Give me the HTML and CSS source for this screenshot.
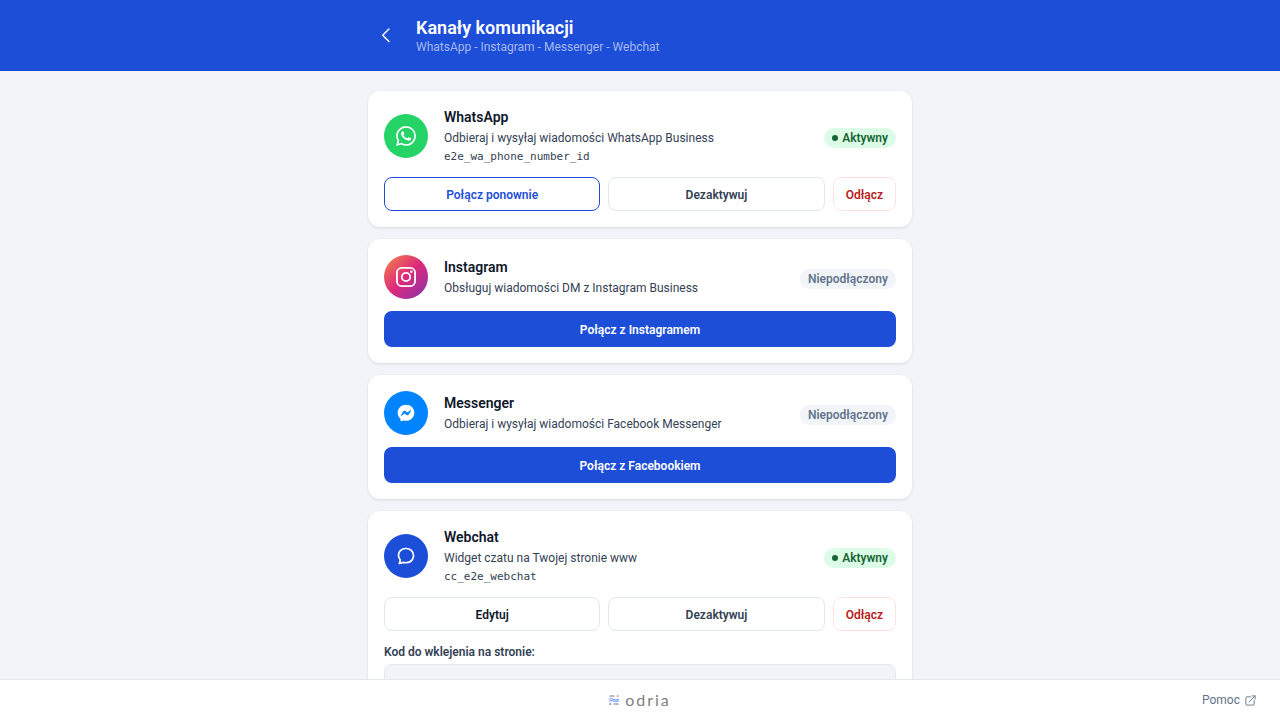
FILE: index.html
```html
<!DOCTYPE html>
<html lang="pl">
<head>
    <meta charset="UTF-8">
    <meta name="viewport" content="width=device-width, initial-scale=1.0">
    <title>Kanały komunikacji</title>
    <link rel="stylesheet" href="styles.css">
</head>
<body>
    <header class="topbar">
        <div class="topbar-inner">
            <a class="back" href="#" aria-label="Wstecz">
                <svg width="20" height="20" viewBox="0 0 24 24" fill="none" stroke="currentColor" stroke-width="1.7" stroke-linecap="round" stroke-linejoin="round"><path d="M15.5 3.500L8 11l7.500 7.500"/></svg>
            </a>
            <div>
                <h1>Kanały komunikacji</h1>
                <p class="subtitle">WhatsApp - Instagram - Messenger - Webchat</p>
            </div>
        </div>
    </header>

    <main class="content">
        <div class="channels">
            <section class="card">
                <div class="card-head">
                    <span class="icon whatsapp">
                        <svg width="20" height="20" viewBox="0 0 24 24" fill="currentColor"><path d="M17.472 14.382c-.297-.149-1.758-.867-2.030-.967-.273-.099-.471-.148-.670.150-.197.297-.767.966-.940 1.164-.173.199-.347.223-.644.075-.297-.150-1.255-.463-2.390-1.475-.883-.788-1.480-1.761-1.653-2.059-.173-.297-.018-.458.130-.606.134-.133.298-.347.446-.520.149-.174.198-.298.298-.497.099-.198.050-.371-.025-.520-.075-.149-.669-1.612-.916-2.207-.242-.579-.487-.500-.669-.510-.173-.008-.371-.010-.570-.010-.198 0-.520.074-.792.372-.272.297-1.040 1.016-1.040 2.479 0 1.462 1.065 2.875 1.213 3.074.149.198 2.096 3.200 5.077 4.487.709.306 1.262.489 1.694.625.712.227 1.360.195 1.871.118.571-.085 1.758-.719 2.006-1.413.248-.694.248-1.289.173-1.413-.074-.124-.272-.198-.570-.347m-5.421 7.403h-.004a9.870 9.870 0 01-5.031-1.378l-.361-.214-3.741.982.998-3.648-.235-.374a9.860 9.860 0 01-1.510-5.260c.001-5.450 4.436-9.884 9.888-9.884 2.640 0 5.122 1.030 6.988 2.898a9.825 9.825 0 012.893 6.994c-.003 5.450-4.437 9.884-9.885 9.884m8.413-18.297A11.815 11.815 0 0012.050 0C5.495 0 .160 5.335.157 11.892c0 2.096.547 4.142 1.588 5.945L.057 24l6.305-1.654a11.882 11.882 0 005.683 1.448h.005c6.554 0 11.890-5.335 11.893-11.893a11.821 11.821 0 00-3.480-8.413z"/></svg>
                    </span>
                    <div class="info">
                        <h2>WhatsApp</h2>
                        <p>Odbieraj i wysyłaj wiadomości WhatsApp Business</p>
                        <code>e2e_wa_phone_number_id</code>
                    </div>
                    <span class="badge active">Aktywny</span>
                </div>
                <div class="actions">
                    <button class="btn btn-outline">Połącz ponownie</button>
                    <button class="btn">Dezaktywuj</button>
                    <button class="btn btn-danger">Odłącz</button>
                </div>
            </section>

            <section class="card">
                <div class="card-head">
                    <span class="icon instagram">
                        <svg width="20" height="20" viewBox="0 0 24 24" fill="none" stroke="currentColor" stroke-width="2.2"><rect x="1.1" y="1.1" width="21.8" height="21.8" rx="5.8"/><circle cx="12" cy="12" r="5"/><circle cx="18.4" cy="5.6" r="1.5" fill="currentColor" stroke="none"/></svg>
                    </span>
                    <div class="info">
                        <h2>Instagram</h2>
                        <p>Obsługuj wiadomości DM z Instagram Business</p>
                    </div>
                    <span class="badge">Niepodłączony</span>
                </div>
                <div class="actions">
                    <button class="btn btn-primary">Połącz z Instagramem</button>
                </div>
            </section>

            <section class="card">
                <div class="card-head">
                    <span class="icon messenger">
                        <svg width="20" height="20" viewBox="0 0 24 24" fill="currentColor"><path d="M12 2C6.360 2 2 6.130 2 11.700c0 2.910 1.190 5.440 3.140 7.170.160.150.260.350.270.570l.050 1.780c.020.570.600.940 1.120.710l1.980-.870c.170-.080.360-.090.530-.040.910.250 1.870.380 2.910.380 5.640 0 10-4.130 10-9.700S17.640 2 12 2zm6 7.460l-2.930 4.670c-.470.730-1.470.920-2.170.370l-2.340-1.730a.6.6 0 00-.720 0l-3.160 2.400c-.420.330-.970-.170-.680-.630l2.930-4.670c.470-.730 1.470-.920 2.170-.400l2.340 1.730a.6.6 0 00.720 0l3.160-2.400c.420-.300.970.200.680.660z"/></svg>
                    </span>
                    <div class="info">
                        <h2>Messenger</h2>
                        <p>Odbieraj i wysyłaj wiadomości Facebook Messenger</p>
                    </div>
                    <span class="badge">Niepodłączony</span>
                </div>
                <div class="actions">
                    <button class="btn btn-primary">Połącz z Facebookiem</button>
                </div>
            </section>

            <section class="card">
                <div class="card-head">
                    <span class="icon webchat">
                        <svg width="20" height="20" viewBox="0 0 24 24" fill="none" stroke="currentColor" stroke-width="2" stroke-linecap="round" stroke-linejoin="round"><path d="M21 11.500a8.380 8.380 0 01-.900 3.800 8.500 8.500 0 01-7.600 4.700 8.380 8.380 0 01-3.800-.300L4 21l1.200-4.300A8.380 8.380 0 013 11.500a8.500 8.500 0 014.700-7.600 8.380 8.380 0 013.800-.900h1a8.480 8.480 0 018.500 8z"/></svg>
                    </span>
                    <div class="info">
                        <h2>Webchat</h2>
                        <p>Widget czatu na Twojej stronie www</p>
                        <code>cc_e2e_webchat</code>
                    </div>
                    <span class="badge active">Aktywny</span>
                </div>
                <div class="actions">
                    <button class="btn btn-dark">Edytuj</button>
                    <button class="btn">Dezaktywuj</button>
                    <button class="btn btn-danger">Odłącz</button>
                </div>
                <div class="embed">
                    <p class="embed-label">Kod do wklejenia na stronie:</p>
                    <pre class="snippet">&lt;script src="https://app.odria.pl/widget.js" data-widget-id="cc_e2e_webchat"&gt;&lt;/script&gt;</pre>
                </div>
            </section>
        </div>
    </main>

    <footer class="footer">
        <a class="brand" href="#">
            <svg width="10" height="10" viewBox="0 0 20 20" fill="none" stroke-width="2.200" stroke-linecap="round">
                <path d="M2 2h8M10 18h8" stroke="#6b7280"/>
                <path d="M1 8c5-3 8 4 18 1M1 12c5-3 8 3 18 0" stroke="#4f7ff5" stroke-width="1.800"/>
                <path d="M17 2h1" stroke="#ef6b6b" stroke-width="3"/>
                <path d="M2 18h1" stroke="#3b6ff0" stroke-width="3"/>
            </svg>
            <span>odria</span>
        </a>
        <a class="help" href="#">
            Pomoc
            <svg width="11" height="11" viewBox="0 0 24 24" fill="none" stroke="currentColor" stroke-width="2" stroke-linecap="round" stroke-linejoin="round"><path d="M12 4H4a2 2 0 00-2 2v14a2 2 0 002 2h14a2 2 0 002-2v-8M15 2h7v7M22 2L9 15"/></svg>
        </a>
    </footer>
</body>
</html>
```
FILE: styles.css
```css
* {
    box-sizing: border-box;
    margin: 0;
    padding: 0;
}
body {
    font-family: Roboto, "Noto Sans", sans-serif;
    font-size: 12px;
    color: #334155;
    background-color: #f1f5f9;
    height: 100vh;
    display: flex;
    flex-direction: column;
}
a {
    color: inherit;
    text-decoration: none;
}
.topbar {
    background-color: #1d4ed8;
    color: #fff;
    padding: 16px;
}
.topbar-inner {
    max-width: 544px;
    margin: 0 auto;
    display: flex;
    align-items: center;
    gap: 12px;
}
.back {
    width: 36px;
    height: 36px;
    display: flex;
    align-items: center;
    justify-content: center;
}
h1 {
    font-size: 18px;
    font-weight: 600;
    line-height: 24px;
}
.subtitle {
    font-size: 12px;
    line-height: 15px;
    color: #a5b8ef;
}
.content {
    flex: 1;
    min-height: 0;
    overflow-y: auto;
    scrollbar-width: none;
    padding: 20px 16px;
}
.channels {
    max-width: 544px;
    margin: 0 auto;
    display: flex;
    flex-direction: column;
    gap: 12px;
}
.card {
    background-color: #fff;
    border-radius: 12px;
    padding: 16px;
    box-shadow: 0 1px 3px rgba(15, 23, 42, 0.12);
}
.card-head {
    display: flex;
    align-items: center;
    gap: 16px;
}
.icon {
    width: 44px;
    height: 44px;
    flex-shrink: 0;
    border-radius: 50%;
    color: #fff;
    display: flex;
    align-items: center;
    justify-content: center;
}
.whatsapp {
    background-color: #25d366;
}
.instagram {
    background: linear-gradient(135deg, #f58549, #dd2a7b 50%, #8134af);
}
.messenger {
    background-color: #0084ff;
}
.webchat {
    background-color: #1d4ed8;
}
.info {
    flex: 1;
    min-width: 0;
}
h2 {
    font-size: 14px;
    font-weight: 600;
    line-height: 21px;
    color: #0f172a;
}
.info p {
    font-size: 12px;
    line-height: 20px;
}
.info code {
    display: block;
    font-family: "DejaVu Sans Mono", monospace;
    font-size: 11px;
    line-height: 17px;
}
.badge {
    display: flex;
    align-items: center;
    gap: 4px;
    margin-top: 4px;
    padding: 0 8px;
    border-radius: 10px;
    font-size: 12px;
    font-weight: 600;
    line-height: 20px;
    color: #64748b;
    background-color: #f1f5f9;
}
.badge.active {
    color: #166534;
    background-color: #dcfce7;
}
.badge.active::before {
    content: "";
    width: 6px;
    height: 6px;
    border-radius: 50%;
    background-color: currentColor;
}
.actions {
    display: flex;
    gap: 8px;
    margin-top: 12px;
}
.btn {
    flex: 1;
    padding: 9px 12px 7px;
    border: 1px solid #e2e8f0;
    border-radius: 8px;
    background-color: #fff;
    color: #334155;
    font-family: inherit;
    font-size: 12px;
    font-weight: 600;
    line-height: 16px;
    cursor: pointer;
}
.btn-outline {
    border-color: #1d4ed8;
    color: #1d4ed8;
}
.btn-dark {
    color: #0f172a;
}
.btn-danger {
    flex: none;
    border-color: #fee2e2;
    color: #b91c1c;
}
.btn-primary {
    padding: 11px 12px 9px;
    border: none;
    background-color: #1d4ed8;
    color: #fff;
}
.embed {
    margin-top: 12px;
}
.embed-label {
    font-size: 12px;
    font-weight: 600;
    line-height: 19px;
    margin-bottom: 2px;
}
.snippet {
    padding: 11px 12px;
    border: 1px solid #e2e8f0;
    border-radius: 8px;
    background-color: #f1f5f9;
    color: #0f172a;
    font-family: "DejaVu Sans Mono", monospace;
    font-size: 11px;
    line-height: 16px;
    white-space: pre-wrap;
    overflow-wrap: anywhere;
}
.footer {
    display: grid;
    grid-template-columns: 1fr auto 1fr;
    align-items: center;
    height: 41px;
    padding: 0 24px;
    border-top: 1px solid #e2e8f0;
    background-color: #fff;
}
.brand {
    grid-column: 2;
    display: flex;
    align-items: center;
    gap: 6px;
    font-family: Lato, sans-serif;
    font-size: 16px;
    line-height: 20px;
    letter-spacing: 2px;
    color: #808080;
}
.help {
    justify-self: end;
    display: flex;
    align-items: center;
    gap: 5px;
    line-height: 18px;
    color: #64748b;
}
```
